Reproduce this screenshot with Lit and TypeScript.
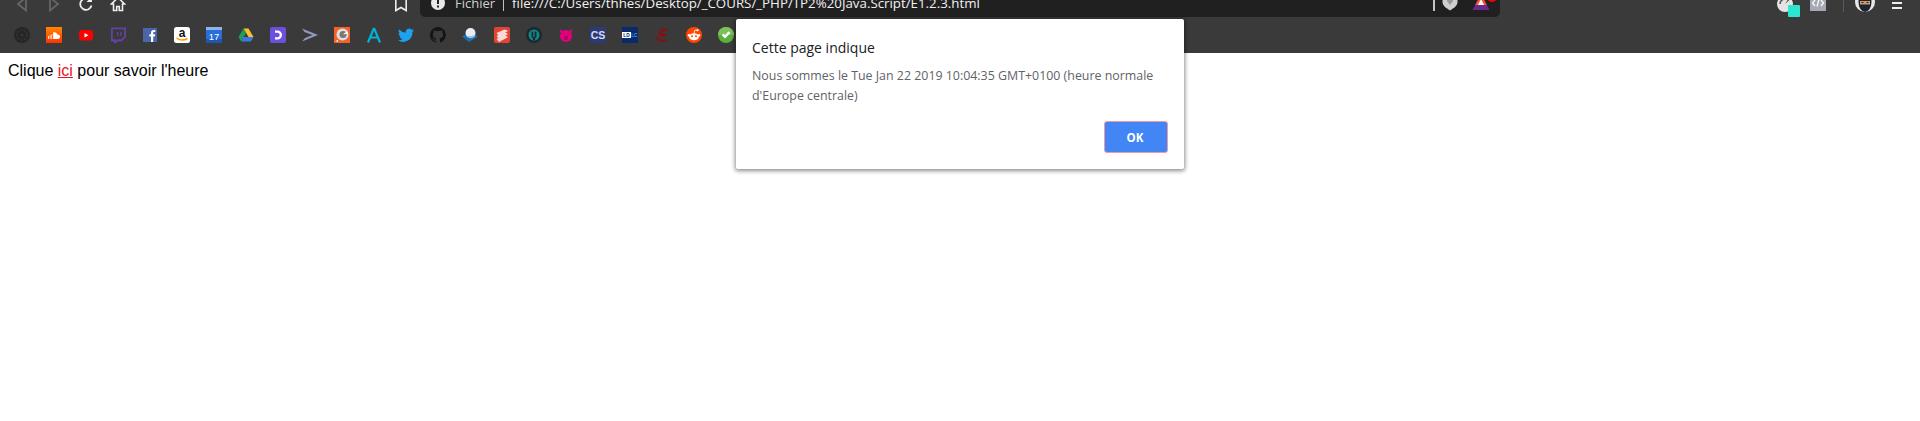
import { LitElement, html, svg, css } from "lit";
import { customElement } from "lit/decorators.js";

// 16x16 favicons for the bookmarks bar, in bar order
const bookmarks = [
  svg`<circle cx="8" cy="8" r="8" fill="#262626"/><circle cx="8" cy="8" r="5" fill="none" stroke="#333" stroke-width="2" stroke-dasharray="2 1.5"/><circle cx="8" cy="8" r="1.5" fill="#333"/>`,
  svg`<defs><linearGradient id="sc" x1="0" y1="0" x2="0" y2="1"><stop offset="0" stop-color="#ff8800"/><stop offset="1" stop-color="#ff3300"/></linearGradient></defs><rect width="16" height="16" fill="url(#sc)"/><path d="M2 9h.8v3H2zM3.700 8h.8v4h-.8zM5.400 7.200h.8V12h-.8zM7.100 5.500c1.800-.7 3.700.1 4.200 2 1.500-.4 2.700.6 2.700 2.200 0 1.300-1 2.300-2.300 2.300H7.100z" fill="#fff"/>`,
  svg`<rect x="1" y="3" width="14" height="10.500" rx="3" fill="#f00"/><path d="M6.500 6l4 2.200-4 2.200z" fill="#fff"/>`,
  svg`<path d="M1 .5h15v9.500l-4.500 4.500H8l-2.500 2H4v-2H1z" fill="#6441a4"/><path d="M2.800 2.300h11.400v7l-3 3H7.500l-1.800 1.500v-1.500H2.800z" fill="#3a3a3a"/><path d="M7 5h1.400v4H7zM10.200 5h1.400v4h-1.400z" fill="#6441a4"/>`,
  svg`<rect x="1" y="1" width="14" height="14" fill="#4a66a8"/><path d="M9 15V9.500H7.300V7.300H9V5.800C9 4 10.100 3 11.700 3h1.600v2.100h-1.100c-.8 0-1 .4-1 1v1.200h2l-.3 2.200h-1.700V15z" fill="#fff"/>`,
  svg`<rect width="16" height="16" rx="2.500" fill="#fff"/><text x="8" y="10" text-anchor="middle" font-family="Liberation Sans, sans-serif" font-size="12" font-weight="700" fill="#111">a</text><path d="M2.500 11c3.500 2.500 7.500 2.500 11 .5" fill="none" stroke="#f90" stroke-width="1.500"/>`,
  svg`<rect width="16" height="16" rx="1" fill="#2a6fd8"/><rect width="16" height="3" fill="#8fb4ec"/><path d="M0 12h16v3a1 1 0 0 1-1 1H1a1 1 0 0 1-1-1z" fill="#1d56b3"/><text x="8" y="13" text-anchor="middle" font-family="Liberation Sans, sans-serif" font-size="9.500" fill="#fff">17</text>`,
  svg`<path d="M5.500 1.500h5L15.500 10h-5z" fill="#fbc02d"/><path d="M5.500 1.500L.5 10 3 14.500 8 6z" fill="#1e9e55"/><path d="M3 14.500h10l2.500-4.500H5.500z" fill="#3b78e7"/>`,
  svg`<rect width="16" height="16" rx="2" fill="#6d4fe0"/><path d="M5 3.500h2.500a4.500 4.500 0 0 1 0 9H5v-2.300h2.500a2.200 2.200 0 0 0 0-4.400H5z" fill="#fff"/>`,
  svg`<path d="M0 1.500L16 8 0 14.500l3-3.500 7.500-3L2.500 5z" fill="#8f9bbd"/>`,
  svg`<rect width="16" height="16" fill="#f4622c"/><circle cx="8.500" cy="7.500" r="6" fill="#dedede"/><circle cx="9" cy="7.500" r="3.500" fill="#777"/><path d="M9 7.500l4-3.500.5 2.500z" fill="#fff"/><path d="M1.500 14.500h2.500v-2z" fill="#fff"/>`,
  svg`<path d="M8 1L2 15.500M8 1L14 15.500M4.500 10.500h7" fill="none" stroke="#05b0d4" stroke-width="2.200"/>`,
  svg`<path d="M16 3.200c-.6.300-1.200.4-1.900.5.700-.4 1.200-1 1.400-1.800-.6.400-1.300.6-2 .8A3.300 3.300 0 0 0 7.800 5.700C5.100 5.600 2.700 4.300 1.100 2.300c-.9 1.500-.4 3.400 1 4.400-.5 0-1-.2-1.500-.4 0 1.600 1.100 3 2.600 3.300-.5.100-1 .2-1.500.1.400 1.300 1.600 2.200 3.100 2.300A6.600 6.600 0 0 1 0 13.300 9.300 9.300 0 0 0 14.400 5c.6-.5 1.200-1.100 1.600-1.800z" fill="#1da1f2"/>`,
  svg`<path d="M8 0a8 8 0 0 0-2.500 15.600c.4.100.5-.2.500-.4v-1.400c-2.200.5-2.700-1-2.700-1-.4-.9-.9-1.200-.9-1.200-.7-.5.100-.5.100-.5.800.1 1.200.8 1.200.8.700 1.200 1.900.9 2.300.7.100-.5.300-.9.500-1.100-1.800-.2-3.600-.9-3.600-4 0-.9.300-1.600.8-2.100-.1-.2-.4-1 .1-2.100 0 0 .7-.2 2.200.8a7.600 7.600 0 0 1 4 0c1.500-1 2.200-.8 2.200-.8.400 1.100.2 1.900.1 2.100.5.600.8 1.300.8 2.100 0 3.100-1.900 3.700-3.700 3.900.3.300.6.800.6 1.500v2.200c0 .2.100.5.600.4A8 8 0 0 0 8 0z" fill="#141414"/>`,
  svg`<path d="M0 9.500L8 5l8 4.500L7 15z" fill="#1c6fb5"/><circle cx="8.500" cy="6" r="5" fill="#e8eef4"/><path d="M3.500 7c1.500 2.500 7.500 3 10 0l-1 3-4 1.500z" fill="#9fc0dc"/>`,
  svg`<rect width="16" height="16" rx="2" fill="#e44232"/><path d="M2.500 6l8-3.500 3 1v1L5 9zM2.500 9l8-3.500 3 1v1L5 12zM2.500 12l8-3.500 3 1v1L5 15z" fill="#f7d9d5"/>`,
  svg`<circle cx="8" cy="8" r="8" fill="#1c2733"/><circle cx="8" cy="8" r="5.500" fill="#0f8c80"/><path d="M5.500 4.500h1.800v5.500h1.400V4.500h1.800V10l-1.400 1.300v2H6.900v-2L5.500 10z" fill="#1c2733"/>`,
  svg`<circle cx="8" cy="9" r="6" fill="#e6007e"/><path d="M1.500 2l3.500 2-2 2.500zM14.500 2L11 4l2 2.500z" fill="#e6007e"/><circle cx="8" cy="11" r="2.200" fill="#a80060"/><path d="M4.500 7h2M9.500 7h2" stroke="#a80060"/>`,
  svg`<rect width="16" height="16" fill="#2d3a78"/><text x="8" y="12" text-anchor="middle" font-family="Liberation Sans, sans-serif" font-size="10.500" font-weight="700" fill="#d5dbef">CS</text>`,
  svg`<rect width="16" height="16" fill="#0b2a6b"/><rect y="5" width="9" height="6" fill="#fff"/><text x="4.500" y="10" text-anchor="middle" font-family="Liberation Sans, sans-serif" font-size="4.800" font-weight="700" fill="#0b2a6b">LD</text><text x="12.400" y="10" text-anchor="middle" font-family="Liberation Sans, sans-serif" font-size="4.800" font-weight="700" fill="#3aa0ee">LC</text>`,
  svg`<path d="M9 1c3 0 5.500 1.500 6 3-2-1-4-1-5.500 0C7 6 9 8 13 7c-1 3-5 3.500-7 2C4 7.500 5 3 9 1zM1 7c0 4 3 8 8 8 2 0 4-1 5-2.500-3 1-7 .5-9.500-1.500C3 10 2 8.500 1 7z" fill="#8a0f14"/>`,
  svg`<circle cx="8" cy="8" r="8" fill="#ff4500"/><ellipse cx="8" cy="9.800" rx="5" ry="3.500" fill="#fff"/><circle cx="3" cy="8.300" r="1.200" fill="#fff"/><circle cx="13" cy="8.300" r="1.200" fill="#fff"/><circle cx="11.500" cy="3.200" r="1.100" fill="#fff"/><path d="M8 6.500l.8-3.300 2.700.500" fill="none" stroke="#fff" stroke-width=".8"/><circle cx="6" cy="9.300" r="1" fill="#ff4500"/><circle cx="10" cy="9.300" r="1" fill="#ff4500"/>`,
  svg`<circle cx="8" cy="8" r="8" fill="#5cb03c"/><path d="M8 0a8 8 0 0 1 8 8H0a8 8 0 0 1 8-8z" fill="#78c257"/><path d="M3.800 8.200l1.700-1.700 1.500 1.500 3.700-3.700 1.700 1.700L7 11.400z" fill="#fff"/>`,
];

@customElement("app-root")
export class AppRoot extends LitElement {
  static styles = css`
    :host {
      display: block;
      position: relative;
      min-height: 421px;
      background: #fff;
      overflow: hidden;
    }

    .chrome {
      background: #3a3a3a;
      height: 53px;
    }

    .toolbar {
      display: grid;
      grid-template-columns: 420px 1080px 1fr;
      grid-template-rows: 17px;
      height: 17px;
    }

    .toolbar > * {
      min-height: 0;
    }

    .toolbar__left {
      display: flex;
      align-items: flex-end;
      padding: 0 11px 5px 14px;
    }

    .nav {
      display: block;
      width: 32px;
      flex: none;
    }

    .nav svg,
    .star {
      display: block;
      width: 16px;
      height: 16px;
      flex: none;
    }

    .star {
      margin-left: auto;
    }

    .omnibox {
      display: flex;
      align-items: flex-end;
      background: #202020;
      border-radius: 0 0 5px 5px;
      padding: 0 0 5px 10px;
      color: #f1f1f1;
      font: 13.3px/17px "Open Sans", sans-serif;
      white-space: nowrap;
    }

    .omnibox svg {
      width: 16px;
      height: 16px;
      flex: none;
      display: block;
    }

    .omnibox__info {
      margin-bottom: 1px;
    }

    .omnibox__scheme {
      margin: 0 0 0 9px;
      color: #d0d0d0;
      font-size: 13px;
    }

    .omnibox__sep {
      width: 1px;
      height: 14px;
      background: #c0c0c0;
      margin: 0 8px 1px 8px;
      flex: none;
    }

    .omnibox__url {
      flex: 1;
    }

    .omnibox__divider {
      width: 2px;
      height: 12px;
      background: #c4c4c4;
      flex: none;
      margin: 0 7px 1px 0;
    }

    .omnibox__shield {
      margin-right: 15px;
      margin-bottom: 1px;
    }

    .omnibox__warn {
      margin-right: 11px;
      margin-bottom: 2px;
      overflow: visible;
    }

    .toolbar__right {
      display: flex;
      align-items: flex-end;
      justify-content: flex-end;
      padding: 0 15px 5px 0;
    }

    .ext {
      display: block;
      width: 16px;
      height: 16px;
      flex: none;
      position: relative;
    }

    .ext svg {
      display: block;
    }

    .ext__badge {
      position: absolute;
      left: 11px;
      bottom: -5px;
      width: 12px;
      height: 12px;
      border-radius: 1px;
      background: #2de6d2;
    }

    .ext--code {
      margin-left: 17px;
    }

    .ext--ninja {
      width: 20px;
      margin-left: 11px;
    }

    .ext--menu {
      margin-left: 14px;
    }

    .toolbar__rule {
      width: 1px;
      height: 12px;
      background: #5a5a5a;
      flex: none;
      margin-left: 17px;
    }

    .bookmarks {
      display: flex;
      gap: 16px;
      height: 36px;
      padding-left: 14px;
      align-items: center;
    }

    .bookmarks svg {
      display: block;
      width: 16px;
      height: 16px;
      flex: none;
    }

    .page {
      padding: 9px 8px;
      color: #000;
      font: 16px/18px "Liberation Sans", Arial, sans-serif;
    }

    .page a {
      color: #e8121f;
      text-decoration: underline;
    }

    .dialog {
      position: absolute;
      left: 736px;
      top: 19px;
      width: 448px;
      height: 150px;
      box-sizing: border-box;
      padding: 19px 16px 16px;
      background: #fff;
      border-radius: 2px;
      box-shadow: 0 1px 4px 1px rgba(0, 0, 0, 0.45);
      display: flex;
      flex-direction: column;
      font-family: "Open Sans", sans-serif;
    }

    .dialog__title {
      font-size: 14px;
      line-height: 20px;
      color: #202124;
    }

    .dialog__body {
      margin-top: 8px;
      font-size: 12.4px;
      line-height: 20px;
      color: #5f6368;
    }

    .dialog__actions {
      margin-top: auto;
      display: flex;
      justify-content: flex-end;
    }

    .dialog__ok {
      width: 64px;
      height: 32px;
      box-sizing: border-box;
      background: #4285f4;
      border: 1px solid #f09a9a;
      border-radius: 3px;
      color: #fff;
      font: 700 11.5px "Open Sans", sans-serif;
      padding: 0 2px 0 0;
    }
  `;

  render() {
    return html`
      <div class="chrome">
        <div class="toolbar">
          <div class="toolbar__left">
            <span class="nav"><svg viewBox="0 0 16 16"><path d="M12 1.500L4 8l8 6.500z" fill="none" stroke="#666" stroke-width="1.800"/></svg></span>
            <span class="nav"><svg viewBox="0 0 16 16"><path d="M4 1.500L12 8l-8 6.500z" fill="none" stroke="#666" stroke-width="1.800"/></svg></span>
            <span class="nav"><svg viewBox="0 0 16 16"><path d="M13.500 9.500A5.700 5.700 0 1 1 11.800 3.900" fill="none" stroke="#eee" stroke-width="1.800"/><path d="M14 .5V6H8.500z" fill="#eee"/></svg></span>
            <span class="nav"><svg viewBox="0 0 16 16"><path d="M8 1.500L1.500 8H3.500v6.500h3.200v-4h2.600v4h3.200V8h2z" fill="none" stroke="#eee" stroke-width="1.600"/></svg></span>
            <svg class="star" viewBox="0 0 16 16"><path d="M2.800 1h10.400v13.500L8 11.500l-5.200 3z" fill="none" stroke="#eee" stroke-width="1.600"/></svg>
          </div>
          <div class="omnibox">
            <svg class="omnibox__info" viewBox="0 0 16 16"><circle cx="8" cy="8" r="7" fill="#e8e8e8"/><path d="M7 3.500h2V9H7zM7 10.500h2v2H7z" fill="#202020"/></svg>
            <span class="omnibox__scheme">Fichier</span>
            <span class="omnibox__sep"></span>
            <span class="omnibox__url">file:///C:/Users/thhes/Desktop/_COURS/_PHP/TP2%20Java.Script/E1.2.3.html</span>
            <span class="omnibox__divider"></span>
            <svg class="omnibox__shield" viewBox="0 0 16 16"><path d="M.5 0h15v7c0 3.500-3.500 6-7.500 8.500C4 13 .5 10.500 .5 7z" fill="#cfcfcf"/><path d="M5 3l3 2 3-2v3l-3 4-3-4z" fill="#9a9a9a"/></svg>
            <svg class="omnibox__warn" viewBox="0 0 16 16"><path d="M8 0l8.500 16H-.5z" fill="#6a2a8c"/><path d="M8 0l5.800 11H2.200z" fill="#f1572c"/><path d="M8 5l3 6H5z" fill="#fff"/><circle cx="19" cy="3" r="5" fill="#f00"/></svg>
          </div>
          <div class="toolbar__right">
            <span class="ext"><svg width="16" height="16" viewBox="0 0 16 16"><circle cx="8" cy="8" r="8" fill="#e4e4e4"/><path d="M8 8l4-6 1.500 1z" fill="#444"/><path d="M3 8a5 5 0 0 1 5-5" fill="none" stroke="#555" stroke-width="1.500"/></svg><span class="ext__badge"></span></span>
            <span class="ext ext--code"><svg width="16" height="16" viewBox="0 0 16 16"><rect width="16" height="15" fill="#a5a9b3"/><path d="M5 4L2.500 7 5 10M11 4l2.500 3L11 10M9 3.500L7 10.500" fill="none" stroke="#fff" stroke-width="1.200"/></svg></span>
            <span class="toolbar__rule"></span>
            <span class="ext ext--ninja"><svg width="20" height="16" viewBox="0 0 20 16"><circle cx="10" cy="6" r="10" fill="#e8e8e8"/><ellipse cx="10" cy="6" rx="6.500" ry="10" fill="#1d2430"/><rect x="5" y="5" width="10" height="3.500" fill="#c99a6e"/><rect x="6.500" y="6" width="2" height="1" fill="#222"/><rect x="11.500" y="6" width="2" height="1" fill="#222"/></svg></span>
            <span class="ext ext--menu"><svg width="16" height="16" viewBox="0 0 16 16"><path d="M3 6h10v2H3zM3 11h10v2H3z" fill="#eee"/></svg></span>
          </div>
        </div>
        <div class="bookmarks">
          ${bookmarks.map((icon) => html`<svg viewBox="0 0 16 16">${icon}</svg>`)}
        </div>
      </div>
      <div class="page">Clique <a href="#">ici</a> pour savoir l'heure</div>
      <div class="dialog">
        <div class="dialog__title">Cette page indique</div>
        <div class="dialog__body">Nous sommes le Tue Jan 22 2019 10:04:35 GMT+0100 (heure normale d'Europe centrale)</div>
        <div class="dialog__actions"><button class="dialog__ok">OK</button></div>
      </div>
    `;
  }
}
